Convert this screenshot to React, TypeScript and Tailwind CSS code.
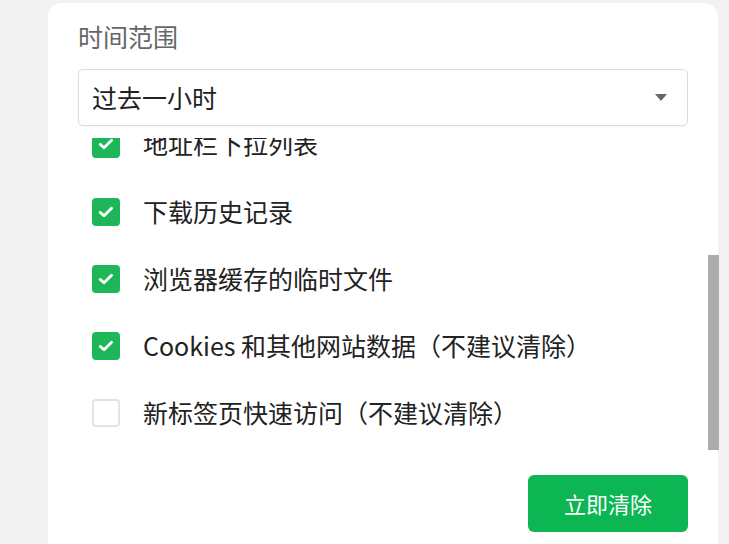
import React from "react";

const items = [
  { label: "地址栏下拉列表", checked: true },
  { label: "下载历史记录", checked: true },
  { label: "浏览器缓存的临时文件", checked: true },
  { label: "Cookies 和其他网站数据（不建议清除）", checked: true },
  { label: "新标签页快速访问（不建议清除）", checked: false },
];

function Box({ checked }: { checked: boolean }) {
  if (!checked) {
    return <div className="w-[28px] h-[28px] shrink-0 rounded-[4px] border-2 border-[#e3e3e3] bg-white" />;
  }
  return (
    <div className="w-[28px] h-[28px] shrink-0 rounded-[4px] bg-[#1db75a] flex items-center justify-center">
      <svg width="18" height="18" viewBox="0 0 18 18">
        <path d="M3.2 9.4 L7 12.8 L14.6 5.2" fill="none" stroke="white" strokeWidth="2.8" strokeLinecap="round" strokeLinejoin="round" />
      </svg>
    </div>
  );
}

export default function App() {
  return (
    <div
      className="relative w-[729px] h-[544px] bg-[#f2f2f2] overflow-hidden pl-[48px] pr-[11px] pt-[3px]"
      style={{ fontFamily: '"Noto Sans CJK SC", "Noto Sans", sans-serif' }}
    >
      <div className="bg-white rounded-t-[14px] h-full px-[30px] pt-[16px] flex flex-col">
        <div className="text-[25px] leading-[34px] text-[#666]">时间范围</div>
        <div className="mt-[16px] h-[57px] border border-[#dcdcdc] rounded-[5px] flex items-center justify-between pl-[13px] pr-[20px] shadow-[0_1px_2px_rgba(0,0,0,0.05)]">
          <span className="text-[25px] text-[#222]">过去一小时</span>
          <svg width="12" height="7" viewBox="0 0 12 7">
            <path d="M0 0 L12 0 L6 7 Z" fill="#666" />
          </svg>
        </div>
        <div className="mt-[12px] h-[317px] overflow-hidden">
          <div className="-mt-[28px] pl-[14px]">
            {items.map((it, i) => (
              <div key={it.label} className={`${i === 0 ? "h-[68px]" : "h-[67px]"} flex items-center gap-[23px]`}>
                <Box checked={it.checked} />
                <span className="text-[25px] text-[#222] whitespace-nowrap">{it.label}</span>
              </div>
            ))}
          </div>
        </div>
        <div className="mt-[20px] flex justify-end">
          <button className="w-[160px] h-[57px] rounded-[6px] bg-[#0cb652] text-white text-[22px]">立即清除</button>
        </div>
      </div>
      <div className="absolute left-[708px] top-[255px] w-[11px] h-[195px] bg-[#acacac]" />
    </div>
  );
}
